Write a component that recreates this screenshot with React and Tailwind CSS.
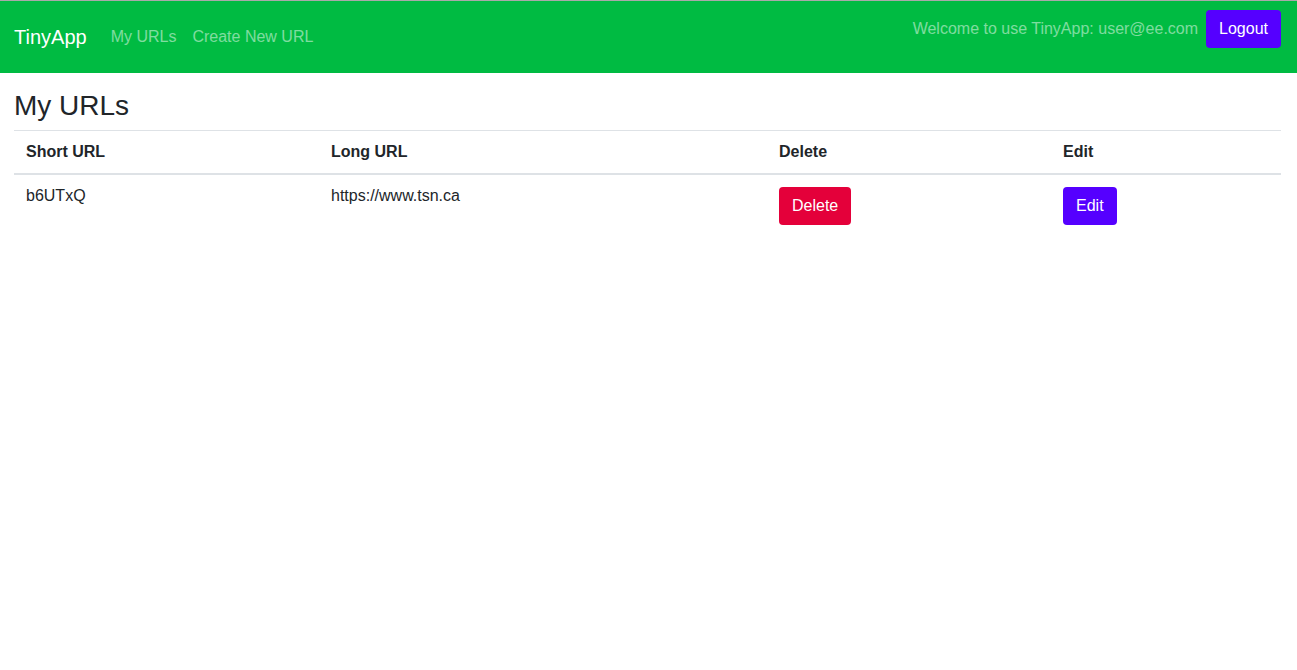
export default function App() {
  const font = { fontFamily: '"Liberation Sans", Arial, sans-serif' };
  return (
    <div style={font} className="min-h-screen bg-white text-[#212529]">
      <div className="h-px bg-[#a9a9a9]" />
      <nav className="flex h-[72px] items-start justify-between bg-[#00bb42] pl-[14px] pr-[16px]">
        <div className="flex h-full items-center">
          <span className="mr-[24px] text-[20px] leading-[30px] text-white">TinyApp</span>
          <a className="mr-[16px] text-[16px] leading-6 text-white/50">My URLs</a>
          <a className="text-[16px] leading-6 text-white/50">Create New URL</a>
        </div>
        <div className="mt-[9px] flex items-center">
          <span className="mr-[8px] text-[16px] leading-6 text-white/50">Welcome to use TinyApp: user@ee.com</span>
          <button className="h-[38px] rounded-[4px] bg-[#5500ff] px-[13px] text-[16px] text-white">Logout</button>
        </div>
      </nav>
      <div className="px-[14px]">
        <h3 className="mt-[16px] mb-[7px] text-[28px] leading-[34px] font-normal">My URLs</h3>
        <table className="w-[1267px] border-collapse text-[16px]">
          <thead>
            <tr className="border-t border-b-2 border-t-[#dee2e6] border-b-[#dee2e6]">
              <th className="w-[305px] px-[12px] pt-[9px] pb-[9px] text-left leading-6 font-bold">Short URL</th>
              <th className="w-[448px] px-[12px] pt-[9px] pb-[9px] text-left leading-6 font-bold">Long URL</th>
              <th className="w-[284px] px-[12px] pt-[9px] pb-[9px] text-left leading-6 font-bold">Delete</th>
              <th className="px-[12px] pt-[9px] pb-[9px] text-left leading-6 font-bold">Edit</th>
            </tr>
          </thead>
          <tbody>
            <tr>
              <td className="px-[12px] pt-[9px] pb-[12px] align-top leading-6">b6UTxQ</td>
              <td className="px-[12px] pt-[9px] pb-[12px] align-top leading-6">https://www.tsn.ca</td>
              <td className="px-[12px] pt-[12px] pb-[12px] align-top">
                <button className="h-[38px] rounded-[4px] bg-[#e4003a] px-[13px] text-[16px] text-white">Delete</button>
              </td>
              <td className="px-[12px] pt-[12px] pb-[12px] align-top">
                <button className="h-[38px] rounded-[4px] bg-[#5500ff] px-[13px] text-[16px] text-white">Edit</button>
              </td>
            </tr>
          </tbody>
        </table>
      </div>
    </div>
  );
}
